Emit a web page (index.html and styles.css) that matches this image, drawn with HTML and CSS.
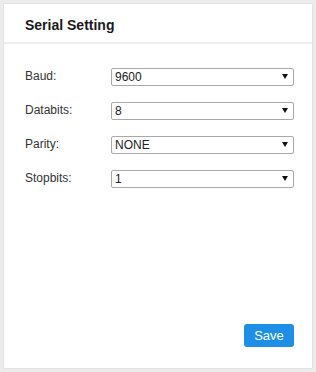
FILE: index.html
```html
<!DOCTYPE html>
<html lang="en">
	<head>
		<meta charset="UTF-8" />
		<meta name="viewport" content="width=device-width, initial-scale=1.0" />
		<title>Serial Setting</title>
		<link rel="stylesheet" href="styles.css">
	</head>

	<body>
		<div class="panel">
			<div class="panelHeader">Serial Setting</div>

			<div class="panelBody">
				<div class="formRow">
					<label for="baud">Baud:</label>
					<div class="selectWrap">
						<select id="baud">
							<option>9600</option>
							<option>19200</option>
							<option>38400</option>
							<option>115200</option>
						</select>
					</div>
				</div>
				<div class="formRow">
					<label for="databits">Databits:</label>
					<div class="selectWrap">
						<select id="databits">
							<option>8</option>
							<option>7</option>
						</select>
					</div>
				</div>
				<div class="formRow">
					<label for="parity">Parity:</label>
					<div class="selectWrap">
						<select id="parity">
							<option>NONE</option>
							<option>ODD</option>
							<option>EVEN</option>
						</select>
					</div>
				</div>
				<div class="formRow">
					<label for="stopbits">Stopbits:</label>
					<div class="selectWrap">
						<select id="stopbits">
							<option>1</option>
							<option>2</option>
						</select>
					</div>
				</div>

				<div class="actions">
					<button class="saveButton" type="button">Save</button>
				</div>
			</div>
		</div>
	</body>
</html>
```

FILE: styles.css
```css
html,
body {
	height: 100%;
}

body {
	margin: 0;
	padding: 3px;
	box-sizing: border-box;
	background-color: #ececec;
	font-family: "Liberation Sans", Arial, sans-serif;
	color: #333;
}

.panel {
	height: 100%;
	box-sizing: border-box;
	background-color: #fff;
	border: 1px solid #e2e2e2;
	display: flex;
	flex-direction: column;
}

.panelHeader {
	height: 40px;
	box-sizing: border-box;
	padding: 13px 0 0 21px;
	font-size: 14px;
	font-weight: bold;
	color: #1a1a1a;
	border-bottom: 2px solid #eeeeee;
}

.panelBody {
	flex: 1;
	display: flex;
	flex-direction: column;
	gap: 16px;
	padding: 23px 18px 21px 21px;
}

.formRow {
	display: flex;
	align-items: center;
	height: 18px;
}

.formRow label {
	width: 86px;
	font-size: 12px;
	color: #333;
}

.selectWrap {
	flex: 1;
	position: relative;
	height: 18px;
}

.selectWrap::after {
	content: "";
	position: absolute;
	right: 6px;
	top: 7px;
	border-left: 3px solid transparent;
	border-right: 3px solid transparent;
	border-top: 5px solid #111;
	pointer-events: none;
}

.selectWrap select {
	appearance: none;
	-webkit-appearance: none;
	width: 100%;
	height: 18px;
	margin: 0;
	padding: 0 0 0 3px;
	box-sizing: border-box;
	border: 1px solid #a9a9a9;
	border-radius: 2px;
	background-color: #fff;
	font-family: "Liberation Sans", Arial, sans-serif;
	font-size: 12px;
	color: #222;
}

.actions {
	margin-top: auto;
	display: flex;
	justify-content: flex-end;
}

.saveButton {
	width: 50px;
	height: 23px;
	border: none;
	border-radius: 3px;
	background-color: #1e8fe6;
	color: #fff;
	font-family: "Liberation Sans", Arial, sans-serif;
	font-size: 13px;
	padding: 0;
}
```
